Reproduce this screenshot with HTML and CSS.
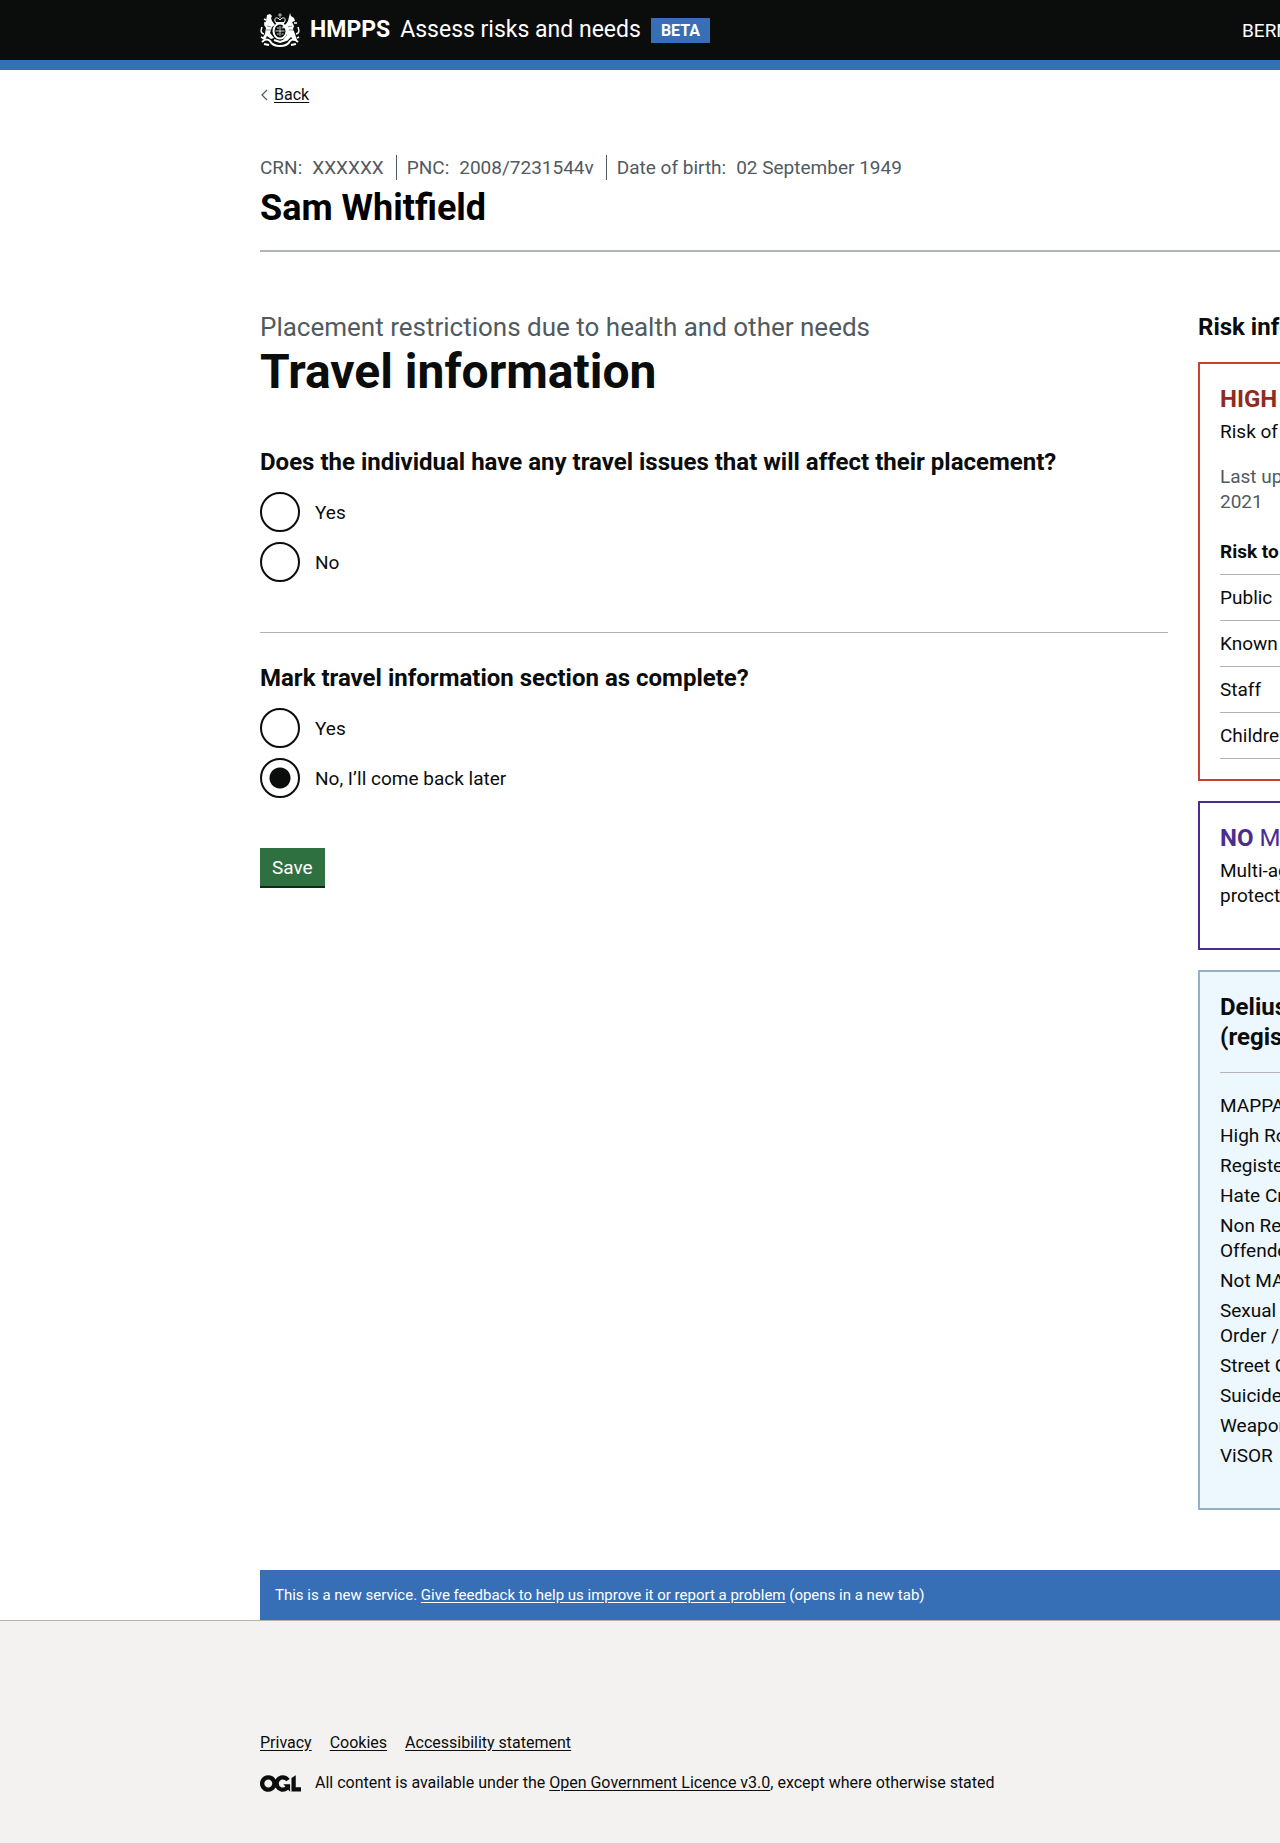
FILE: index.html
```html
<!DOCTYPE html>
<html lang="en">
<head>
<meta charset="utf-8">
<meta name="viewport" content="width=device-width, initial-scale=1">
<title>Travel information - Assess risks and needs</title>
<link rel="stylesheet" href="styles.css">
</head>
<body>
<header class="header">
  <div class="container header-row">
    <a class="brand" href="#">
      <svg class="crest" viewBox="0 0 40 36" width="40" height="36" aria-hidden="true" fill="none" stroke="#fff">
        <path d="M20 1v5M18 3h4" stroke-width="1" opacity=".7"/>
        <path d="M15 9c-1-4 3-4 5-1 2-3 6-3 5 1l-1 2h-8z" stroke-width="1"/>
        <path d="M16 11h8" stroke-width="2"/>
        <ellipse cx="20" cy="19" rx="6.5" ry="7.5" stroke-width="2"/>
        <path d="M20 14v10M15.500 19h9M17 16h2M21.500 16h2M17 22h2M21.500 22h2" stroke-width="1" opacity=".8"/>
        <path d="M7 3l3-1 2 2-1 2 1 3 3 4-3 2-2 6 4 5-3 1-4-3-2 4-3-1 3-5 1-6-2-3 2-4z" fill="#fff" stroke="none"/>
        <path d="M30 1l1 3 3 2 1 3-3 1 2 4-1 3 2 5 2 6-3 1-3-4-4 4-4-1 4-5-1-6-4-2 4-3 2-3z" fill="#fff" stroke="none"/>
        <path d="M6 8l-2-1M7 11l-3 0M4 22c-4-1-3-4-2-7M34 11l3 0M36 22c4-1 3-4 2-7M3 26l-2-1M37 26l2-1" stroke-width="1.500"/>
        <path d="M7 14l4 1M6 18l5 0M32 14l-4 1M34 18l-5 0" stroke="#0b0c0c" stroke-width=".5"/>
        <path d="M2 30c3-3 6-3 8-1 2 4 5 5 10 5s8-1 10-5c2-2 5-2 8 1M4 32l5 1M36 32l-5 1" stroke-width="2"/>
        <path d="M14 28l6 2 6-2" stroke-width="2"/>
      </svg>
      <strong class="brand-org">HMPPS</strong>
      <span>Assess risks and needs</span>
    </a>
    <strong class="tag">BETA</strong>
    <a class="user" href="#">BERNARD BEAKS</a>
  </div>
</header>

<div class="container">
  <a class="back" href="#">
    <svg width="8" height="12" viewBox="0 0 8 12" aria-hidden="true"><path d="M7 1L2 6l5 5" fill="none" stroke="#505a5f" stroke-width="1.200"/></svg>
    <span>Back</span>
  </a>

  <section class="person">
    <dl class="ids">
      <div><dt>CRN:</dt><dd>XXXXXX</dd></div>
      <div><dt>PNC:</dt><dd>2008/7231544v</dd></div>
      <div><dt>Date of birth:</dt><dd>02 September 1949</dd></div>
    </dl>
    <h2 class="name">Sam Whitfield</h2>
  </section>

  <div class="columns">
    <main>
      <span class="caption">Placement restrictions due to health and other needs</span>
      <h1 class="title">Travel information</h1>
      <form>
        <fieldset class="group">
          <legend>Does the individual have any travel issues that will affect their placement?</legend>
          <div class="radio"><input type="radio" name="issues" id="issues-yes"><label for="issues-yes">Yes</label></div>
          <div class="radio"><input type="radio" name="issues" id="issues-no"><label for="issues-no">No</label></div>
        </fieldset>
        <hr class="rule">
        <fieldset class="group">
          <legend>Mark travel information section as complete?</legend>
          <div class="radio"><input type="radio" name="complete" id="complete-yes"><label for="complete-yes">Yes</label></div>
          <div class="radio"><input type="radio" name="complete" id="complete-no" checked><label for="complete-no">No, I’ll come back later</label></div>
        </fieldset>
        <button class="save" type="button">Save</button>
      </form>
    </main>

    <aside class="risk">
      <h2 class="heading">Risk information</h2>
      <section class="card card-high">
        <h3 class="heading">HIGH RoSH</h3>
        <p>Risk of serious harm</p>
        <p class="updated">Last updated: 11th October 2021</p>
        <table>
          <thead><tr><th scope="col">Risk to</th><th scope="col">Community</th></tr></thead>
          <tbody>
            <tr><td>Public</td><td>High</td></tr>
            <tr><td>Known Adult</td><td>Medium</td></tr>
            <tr><td>Staff</td><td>Low</td></tr>
            <tr><td>Children</td><td>Low</td></tr>
          </tbody>
        </table>
      </section>
      <section class="card card-mappa">
        <h3 class="heading">NO <span>MAPPA</span></h3>
        <p>Multi-agency public<br>protection arrangements</p>
      </section>
      <section class="card card-flags">
        <h3 class="heading">Delius risk flags<br>(registers)</h3>
        <ul>
          <li>MAPPA</li>
          <li>High RoSH</li>
          <li>Registered sex offender</li>
          <li>Hate Crime</li>
          <li>Non Registered Sexual<br>Offender</li>
          <li>Not MAPPA Eligible</li>
          <li>Sexual Harm Prevention<br>Order / Notification</li>
          <li>Street Gangs</li>
          <li>Suicide/self-harm</li>
          <li>Weapons</li>
          <li>ViSOR</li>
        </ul>
      </section>
    </aside>
  </div>

  <div class="feedback">This is a new service. <a href="#">Give feedback to help us improve it or report a problem</a> (opens in a new tab)</div>
</div>

<footer class="footer">
  <div class="container">
    <nav class="footer-links">
      <a href="#">Privacy</a>
      <a href="#">Cookies</a>
      <a href="#">Accessibility statement</a>
    </nav>
    <div class="licence">
      <svg width="41" height="17" viewBox="0 0 483.2 195.7" aria-hidden="true"><path fill="currentColor" d="M421.5 142.8V.1l-50.7 32.3v161.1h112.4v-50.7zm-122.3-9.6A47.12 47.12 0 0 1 221 97.8c0-26 21.1-47.1 47.1-47.1 16.7 0 31.4 8.7 39.7 21.8l42.7-27.2A97.63 97.63 0 0 0 268.1 0c-36.5 0-68.3 20.1-85.1 49.7A98 98 0 0 0 97.8 0C43.9 0 0 43.9 0 97.8s43.9 97.8 97.8 97.8c36.5 0 68.3-20.1 85.1-49.7a97.76 97.76 0 0 0 149.6 25.4l19.4 22.2h3v-87.8h-80l24.3 27.5zM97.8 145c-26 0-47.1-21.1-47.1-47.1s21.1-47.1 47.1-47.1 47.1 21.1 47.1 47.1S123.8 145 97.8 145"/></svg>
      <span>All content is available under the <a href="#">Open Government Licence v3.0</a>, except where otherwise stated</span>
    </div>
  </div>
</footer>
</body>
</html>
```

FILE: styles.css
```css
* { box-sizing: border-box; }

html { background: #f3f2f1; }

body {
  margin: 0;
  overflow-x: hidden;
  background: #fff;
  color: #0b0c0c;
  font: 19px/25px Roboto, "Liberation Sans", sans-serif;
}

h1, h2, h3, p, dl, dd, ul, fieldset, legend { margin: 0; padding: 0; }
a { color: inherit; text-underline-offset: 2px; }

/* The risk column runs on past the right edge of narrower windows */
.container {
  margin-left: 260px;
  margin-right: -218px;
}

.header {
  background: #0b0c0c;
  border-bottom: 10px solid #376fb7;
  color: #fff;
}
.header-row {
  display: flex;
  align-items: center;
  height: 60px;
}
.header a { text-decoration: none; }
.brand {
  display: flex;
  align-items: center;
  gap: 10px;
  font-size: 23px;
  line-height: 30px;
}
.brand-org { font-weight: 700; }
.tag {
  margin-left: 10px;
  padding: 0 10px;
  background: #376fb7;
  font-size: 16px;
  line-height: 25px;
}
.user {
  width: 256px;
  margin-left: auto;
  white-space: nowrap;
}

.back {
  display: inline-flex;
  align-items: center;
  gap: 6px;
  margin-top: 15px;
  font-size: 16px;
  line-height: 20px;
  text-decoration: none;
}
.back span { text-decoration: underline; }

.person {
  margin-top: 48px;
  padding-bottom: 22px;
  border-bottom: 2px solid #b1b4b6;
}
.ids { display: flex; color: #505a5f; }
.ids div { display: flex; gap: 10px; }
.ids div + div {
  margin-left: 12px;
  padding-left: 10px;
  border-left: 1px solid #505a5f;
}
.name {
  margin-top: 8px;
  color: #000;
  font-size: 36px;
  line-height: 40px;
}

.columns {
  display: grid;
  grid-template-columns: minmax(0, 1fr) 300px;
  gap: 30px;
  padding: 60px 0;
}

.caption {
  display: block;
  color: #505a5f;
  font-size: 26px;
  line-height: 30px;
}
.title {
  margin: 5px 0 50px;
  font-size: 48px;
  line-height: 50px;
}
.heading, legend {
  font-size: 24px;
  font-weight: 700;
  line-height: 30px;
}

.group { min-width: 0; border: 0; }
legend { margin-bottom: 15px; }
.radio {
  display: flex;
  align-items: center;
  gap: 15px;
}
.radio + .radio { margin-top: 10px; }
.radio input {
  appearance: none;
  flex: none;
  width: 40px;
  height: 40px;
  margin: 0;
  border: 2px solid #0b0c0c;
  border-radius: 50%;
  background: #fff;
}
.radio input:checked {
  background: radial-gradient(circle, #0b0c0c 0 10px, #fff 11px);
}
.rule {
  margin: 50px 0 30px;
  border: 0;
  border-top: 1px solid #b1b4b6;
}
.save {
  display: block;
  height: 40px;
  margin-top: 50px;
  padding: 0 12px;
  border: 0;
  border-bottom: 2px solid #12291a;
  background: #2f7041;
  color: #fff;
  font: inherit;
}

.risk > .heading { margin-bottom: 20px; }
.card {
  padding: 20px;
  border: 2px solid;
}
.card + .card { margin-top: 20px; }
.card p { margin-top: 5px; color: #0b0c0c; }
.card-high { border-color: #c6432f; }
.card-high .heading { color: #8f2c20; }
.card-high .updated { margin: 20px 0 15px; color: #505a5f; }
.card-mappa { border-color: #4b2d90; }
.card-mappa .heading { color: #4b2d90; }
.card-mappa .heading span { font-weight: 400; }
.card-mappa p { margin-bottom: 20px; }
.card-flags {
  border-color: #95afc6;
  background: #ecf7fe;
}
.card-flags ul {
  display: grid;
  gap: 5px;
  margin-top: 20px;
  padding: 20px 0;
  border-top: 1px solid #b1b4b6;
  list-style: none;
}
table {
  width: 100%;
  border-spacing: 0;
}
th, td {
  padding: 10px 0;
  border-bottom: 1px solid #b1b4b6;
  text-align: left;
}

.feedback {
  padding: 15px;
  background: #376fb7;
  color: #fff;
  font-size: 15px;
  line-height: 20px;
}

.footer {
  padding: 112px 0 50px;
  border-top: 1px solid #b1b4b6;
  background: #f3f2f1;
  font-size: 16px;
  line-height: 20px;
}
.footer-links { display: flex; gap: 18px; }
.licence {
  display: flex;
  align-items: center;
  gap: 14px;
  margin-top: 20px;
}
```
